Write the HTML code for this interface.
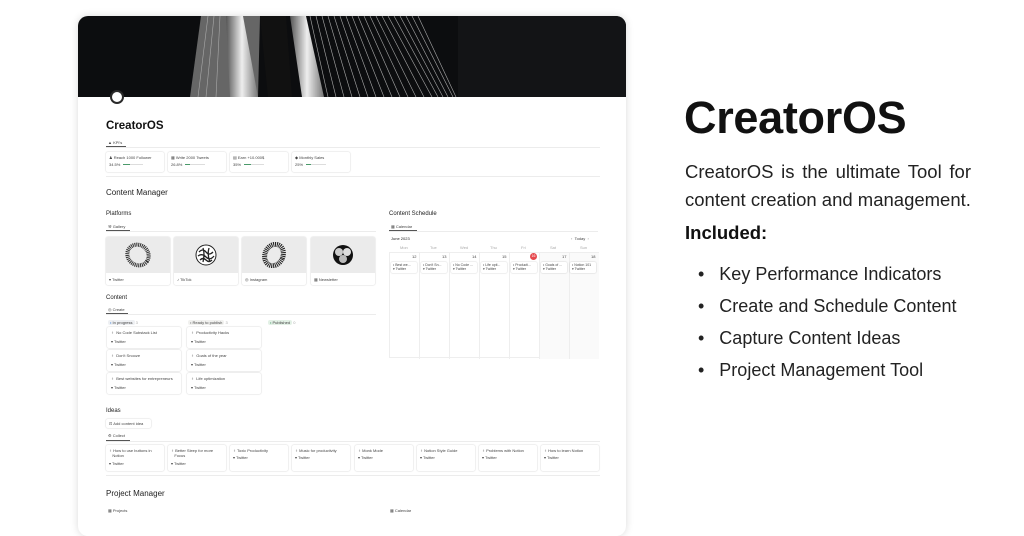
<!DOCTYPE html>
<html><head><meta charset="utf-8"><style>
*{margin:0;padding:0;box-sizing:border-box}
body{width:1024px;height:512px;overflow:hidden;background:#fff;font-family:"Liberation Sans",sans-serif;position:relative;color:#222}
.a{position:absolute}
#card{left:78px;top:16px;width:548px;height:520px;border-radius:10px;background:#fff;box-shadow:0 0 8px rgba(0,0,0,.15);overflow:hidden}
.t{position:absolute;font-size:4px;color:#444;white-space:nowrap}
.h{position:absolute;font-size:7px;color:#222;white-space:nowrap}
.bx{position:absolute;border-radius:2px;box-shadow:0 0 1.5px rgba(0,0,0,.25);background:#fff}
.ln{position:absolute;height:1px;background:#ececec}
.ul{position:absolute;height:1px;background:#555}
.bar{display:inline-block;width:20px;height:1px;background:#ddd;vertical-align:middle;margin-left:3px;position:relative}
.bar i{position:absolute;left:0;top:0;height:1px;background:#4a9a6a}
.cell{position:absolute;top:0;height:106px;border-right:1px solid #eee}
.ev{position:absolute;background:#fff;box-shadow:0 0 1.5px rgba(0,0,0,.25);border-radius:1.5px;height:11px;width:26px}
</style></head><body>
<div id="card" class="a">
 <div class="a" style="left:0;top:0;width:548px;height:81px;background:#0c0d0f;overflow:hidden">
  <svg width="548" height="81" style="position:absolute;left:0;top:0">
   <defs><linearGradient id="g1" x1="0" x2="1"><stop offset="0" stop-color="#555"/><stop offset=".5" stop-color="#eee"/><stop offset="1" stop-color="#777"/></linearGradient></defs>
   <polygon points="123,0 182,0 180,81 112,81" fill="#666"/>
   <polygon points="148,0 165,0 180,81 152,81" fill="url(#g1)"/>
   <polygon points="182,0 208,0 214,81 190,81" fill="#111"/>
   <polygon points="212,0 228,0 246,81 224,81" fill="url(#g1)"/>
   <g stroke="#aaa" stroke-width=".6">
    <line x1="232" y1="0" x2="250" y2="81"/><line x1="238" y1="0" x2="258" y2="81"/><line x1="244" y1="0" x2="266" y2="81"/><line x1="250" y1="0" x2="274" y2="81"/><line x1="256" y1="0" x2="282" y2="81"/><line x1="262" y1="0" x2="290" y2="81"/><line x1="268" y1="0" x2="298" y2="81"/><line x1="274" y1="0" x2="306" y2="81"/><line x1="280" y1="0" x2="314" y2="81"/><line x1="286" y1="0" x2="322" y2="81"/><line x1="292" y1="0" x2="330" y2="81"/><line x1="298" y1="0" x2="338" y2="81"/><line x1="304" y1="0" x2="346" y2="81"/><line x1="310" y1="0" x2="354" y2="81"/><line x1="316" y1="0" x2="360" y2="81"/><line x1="322" y1="0" x2="365" y2="81"/><line x1="328" y1="0" x2="370" y2="81"/><line x1="334" y1="0" x2="375" y2="81"/><line x1="340" y1="0" x2="378" y2="81"/>
    <line x1="130" y1="0" x2="120" y2="81"/><line x1="136" y1="0" x2="128" y2="81"/><line x1="142" y1="0" x2="138" y2="81"/>
   </g>
   <rect x="380" y="0" width="168" height="81" fill="#131416"/>
  </svg>
 </div>
 <div class="a" style="left:32px;top:74px;width:14px;height:14px;border-radius:50%;border:2px solid #2a2a2a;background:#fff"></div>
 <div class="a" style="left:28px;top:104px;font-size:11.5px;font-weight:bold;color:#111">CreatorOS</div>
 <div class="t" style="left:30px;top:124px">▲ KPI's</div>
 <div class="ul" style="left:28px;top:130px;width:20px"></div>
 <div class="ln" style="left:28px;top:131px;width:494px"></div>
 <div class="bx" style="left:28px;top:136px;width:58px;height:20px"></div>
 <div class="bx" style="left:90px;top:136px;width:58px;height:20px"></div>
 <div class="bx" style="left:152px;top:136px;width:58px;height:20px"></div>
 <div class="bx" style="left:214px;top:136px;width:58px;height:20px"></div>
 <div class="t" style="left:31px;top:139px">♟ Reach 1000 Follower</div><div class="t" style="left:31px;top:146px">34.5%<span class="bar"><i style="width:7px"></i></span></div>
 <div class="t" style="left:93px;top:139px">▦ Write 2000 Tweets</div><div class="t" style="left:93px;top:146px">26.8%<span class="bar"><i style="width:5px"></i></span></div>
 <div class="t" style="left:155px;top:139px">▤ Earn +10.000$</div><div class="t" style="left:155px;top:146px">35%<span class="bar"><i style="width:7px"></i></span></div>
 <div class="t" style="left:217px;top:139px">◆ Monthly Sales</div><div class="t" style="left:217px;top:146px">25%<span class="bar"><i style="width:5px"></i></span></div>
 <div class="ln" style="left:28px;top:160px;width:494px"></div>
 <div class="h" style="left:28px;top:172px;font-size:8px">Content Manager</div>
 <div class="h" style="left:28px;top:195px;font-size:6px">Platforms</div>
 <div class="t" style="left:30px;top:208px">⚒ Gallery</div>
 <div class="ul" style="left:28px;top:214px;width:24px"></div>
 <div class="ln" style="left:28px;top:215px;width:270px"></div>
 <div class="bx" style="left:28px;top:221px;width:64px;height:48px;overflow:hidden"><div class="a" style="left:0;top:0;width:64px;height:36px;background:#ebebeb"></div><svg class="a" style="left:18px;top:5px" width="28" height="26"><ellipse cx="14" cy="13" rx="11" ry="10" fill="none" stroke="#333" stroke-width="4" stroke-dasharray="1 .8" transform="rotate(35 14 13)"/></svg><div class="t" style="left:3px;top:40px">▾ Twitter</div></div>
 <div class="bx" style="left:96px;top:221px;width:64px;height:48px;overflow:hidden"><div class="a" style="left:0;top:0;width:64px;height:36px;background:#ebebeb"></div><svg class="a" style="left:21px;top:7px" width="22" height="22"><circle cx="11" cy="11" r="10" fill="#fff" stroke="#222" stroke-width="1"/><path d="M4 8q4-4 7 0t7 0M3 12q4-3 8 1t8-1M5 16q3-3 6 0t6 0M8 4q2 6 0 14M14 4q-2 7 1 14" stroke="#222" stroke-width="1.3" fill="none"/></svg><div class="t" style="left:3px;top:40px">♪ TikTok</div></div>
 <div class="bx" style="left:164px;top:221px;width:64px;height:48px;overflow:hidden"><div class="a" style="left:0;top:0;width:64px;height:36px;background:#ebebeb"></div><svg class="a" style="left:20px;top:5px" width="24" height="26"><ellipse cx="12" cy="13" rx="9" ry="11" fill="none" stroke="#222" stroke-width="5" stroke-dasharray="1 .8" transform="rotate(25 12 13)"/></svg><div class="t" style="left:3px;top:40px">◎ Instagram</div></div>
 <div class="bx" style="left:233px;top:221px;width:64px;height:48px;overflow:hidden"><div class="a" style="left:0;top:0;width:64px;height:36px;background:#ebebeb"></div><svg class="a" style="left:21px;top:7px" width="22" height="22"><circle cx="11" cy="11" r="10" fill="#111"/><circle cx="7" cy="8" r="4" fill="#ccc"/><circle cx="15" cy="8" r="4" fill="#ddd"/><circle cx="11" cy="15" r="4" fill="#bbb"/></svg><div class="t" style="left:3px;top:40px">▦ Newsletter</div></div>
 <div class="h" style="left:28px;top:279px;font-size:6px">Content</div>
 <div class="t" style="left:30px;top:291px">◎ Create</div>
 <div class="ul" style="left:28px;top:297px;width:22px"></div>
 <div class="ln" style="left:28px;top:298px;width:270px"></div>
 <div class="t" style="left:30px;top:304px"><span style="background:#eef0f3;border-radius:2px;padding:0 2px"><b style="color:#3a7bd5">•</b> In progress</span> <span style="color:#aaa">3</span></div>
 <div class="t" style="left:110px;top:304px"><span style="background:#f1f1ef;border-radius:2px;padding:0 2px"><b style="color:#777">•</b> Ready to publish</span> <span style="color:#aaa">3</span></div>
 <div class="t" style="left:190px;top:304px"><span style="background:#e3f1e6;border-radius:2px;padding:0 2px"><b style="color:#4a9a6a">•</b> Published</span> <span style="color:#aaa">0</span></div>
 <div class="bx" style="left:29px;top:311px;width:74px;height:21px"></div><div class="t" style="left:33px;top:314px">♀ &nbsp;No Code Substack List</div><div class="t" style="left:33px;top:323px">▾ Twitter</div>
 <div class="bx" style="left:29px;top:334px;width:74px;height:21px"></div><div class="t" style="left:33px;top:337px">♀ &nbsp;Don't Snooze</div><div class="t" style="left:33px;top:346px">▾ Twitter</div>
 <div class="bx" style="left:29px;top:357px;width:74px;height:21px"></div><div class="t" style="left:33px;top:360px">♀ &nbsp;Best websites for entrepreneurs</div><div class="t" style="left:33px;top:369px">▾ Twitter</div>
 <div class="bx" style="left:109px;top:311px;width:74px;height:21px"></div><div class="t" style="left:113px;top:314px">♀ &nbsp;Productivity Hacks</div><div class="t" style="left:113px;top:323px">▾ Twitter</div>
 <div class="bx" style="left:109px;top:334px;width:74px;height:21px"></div><div class="t" style="left:113px;top:337px">♀ &nbsp;Goals of the year</div><div class="t" style="left:113px;top:346px">▾ Twitter</div>
 <div class="bx" style="left:109px;top:357px;width:74px;height:21px"></div><div class="t" style="left:113px;top:360px">♀ &nbsp;Life optimization</div><div class="t" style="left:113px;top:369px">▾ Twitter</div>
 <div class="h" style="left:28px;top:392px;font-size:6px">Ideas</div>
 <div class="bx" style="left:28px;top:403px;width:45px;height:9px"></div><div class="t" style="left:31px;top:405px">⊡ Add content idea</div>
 <div class="t" style="left:30px;top:417px">⚙ Collect</div>
 <div class="ul" style="left:28px;top:424px;width:24px"></div>
 <div class="ln" style="left:28px;top:425px;width:494px"></div>
 <div class="bx" style="left:28px;top:429px;width:58px;height:26px"></div><div class="t" style="left:31px;top:432px">♀ How to use buttons in<br>&nbsp;&nbsp;&nbsp;Notion</div><div class="t" style="left:31px;top:445px">▾ Twitter</div>
 <div class="bx" style="left:90px;top:429px;width:58px;height:26px"></div><div class="t" style="left:93px;top:432px">♀ Better Sleep for more<br>&nbsp;&nbsp;&nbsp;Focus</div><div class="t" style="left:93px;top:445px">▾ Twitter</div>
 <div class="bx" style="left:152px;top:429px;width:58px;height:26px"></div><div class="t" style="left:155px;top:432px">♀ Toxic Productivity</div><div class="t" style="left:155px;top:439px">▾ Twitter</div>
 <div class="bx" style="left:214px;top:429px;width:58px;height:26px"></div><div class="t" style="left:217px;top:432px">♀ Music for productivity</div><div class="t" style="left:217px;top:439px">▾ Twitter</div>
 <div class="bx" style="left:277px;top:429px;width:58px;height:26px"></div><div class="t" style="left:280px;top:432px">♀ Monk Mode</div><div class="t" style="left:280px;top:439px">▾ Twitter</div>
 <div class="bx" style="left:339px;top:429px;width:58px;height:26px"></div><div class="t" style="left:342px;top:432px">♀ Notion Style Guide</div><div class="t" style="left:342px;top:439px">▾ Twitter</div>
 <div class="bx" style="left:401px;top:429px;width:58px;height:26px"></div><div class="t" style="left:404px;top:432px">♀ Problems with Notion</div><div class="t" style="left:404px;top:439px">▾ Twitter</div>
 <div class="bx" style="left:463px;top:429px;width:58px;height:26px"></div><div class="t" style="left:466px;top:432px">♀ How to learn Notion</div><div class="t" style="left:466px;top:439px">▾ Twitter</div>
 <div class="ln" style="left:28px;top:459px;width:494px"></div>
 <div class="h" style="left:28px;top:473px;font-size:8px">Project Manager</div>
 <div class="t" style="left:30px;top:492px">▦ Projects</div>
 <div class="t" style="left:312px;top:492px">▦ Calendar</div>
 <div class="h" style="left:311px;top:195px;font-size:6px">Content Schedule</div>
 <div class="t" style="left:313px;top:208px">▦ Calendar</div>
 <div class="ul" style="left:311px;top:214px;width:28px"></div>
 <div class="ln" style="left:311px;top:215px;width:209px"></div>
 <div class="t" style="left:313px;top:220px;color:#222">June 2023</div>
 <div class="t" style="left:493px;top:220px;color:#888">‹ &nbsp;<span style="color:#444">Today</span> &nbsp;›</div>
 <div class="a" style="left:311px;top:236px;width:210px;height:106px;border:1px solid #eee;background:#fff">
  <div class="cell" style="left:0;width:30px"></div><div class="cell" style="left:30px;width:30px"></div><div class="cell" style="left:60px;width:30px"></div><div class="cell" style="left:90px;width:30px"></div><div class="cell" style="left:120px;width:30px"></div><div class="cell" style="left:150px;width:30px;background:#fafafa"></div><div class="cell" style="left:180px;width:29px;background:#fafafa;border:0"></div>
 </div>
 <div class="t" style="left:322px;top:229px;color:#aaa">Mon</div><div class="t" style="left:352px;top:229px;color:#aaa">Tue</div><div class="t" style="left:382px;top:229px;color:#aaa">Wed</div><div class="t" style="left:412px;top:229px;color:#aaa">Thu</div><div class="t" style="left:443px;top:229px;color:#aaa">Fri</div><div class="t" style="left:472px;top:229px;color:#aaa">Sat</div><div class="t" style="left:502px;top:229px;color:#aaa">Sun</div>
 <div class="t" style="left:334px;top:238px">12</div><div class="t" style="left:364px;top:238px">13</div><div class="t" style="left:394px;top:238px">14</div><div class="t" style="left:424px;top:238px">15</div>
 <div class="a" style="left:452px;top:237px;width:7px;height:7px;border-radius:50%;background:#e5484d;color:#fff;font-size:3.5px;text-align:center;line-height:7px">16</div>
 <div class="t" style="left:484px;top:238px">17</div><div class="t" style="left:513px;top:238px">18</div>
 <div class="ev" style="left:313px;top:246px"></div><div class="t" style="left:315px;top:247px;font-size:3.5px">• Best we...<br>▾ Twitter</div>
 <div class="ev" style="left:343px;top:246px"></div><div class="t" style="left:345px;top:247px;font-size:3.5px">• Don't Sn...<br>▾ Twitter</div>
 <div class="ev" style="left:373px;top:246px"></div><div class="t" style="left:375px;top:247px;font-size:3.5px">• No Code ...<br>▾ Twitter</div>
 <div class="ev" style="left:403px;top:246px"></div><div class="t" style="left:405px;top:247px;font-size:3.5px">• Life opti...<br>▾ Twitter</div>
 <div class="ev" style="left:433px;top:246px"></div><div class="t" style="left:435px;top:247px;font-size:3.5px">• Producti...<br>▾ Twitter</div>
 <div class="ev" style="left:463px;top:246px"></div><div class="t" style="left:465px;top:247px;font-size:3.5px">• Goals of ...<br>▾ Twitter</div>
 <div class="ev" style="left:492px;top:246px"></div><div class="t" style="left:494px;top:247px;font-size:3.5px">• Notion 101<br>▾ Twitter</div>
</div>
<div class="a" style="left:684px;top:92px;font-size:45px;font-weight:bold;color:#111;letter-spacing:-.3px">CreatorOS</div>
<div class="a" style="left:685px;top:158px;width:286px;font-size:18.5px;line-height:28px;color:#222;text-align:justify;text-align-last:justify">CreatorOS is the ultimate Tool for</div>
<div class="a" style="left:685px;top:186px;font-size:18.5px;line-height:28px;color:#222">content creation and management.</div>
<div class="a" style="left:685px;top:222px;font-size:18.5px;font-weight:bold;color:#111">Included:</div>
<div class="a" style="left:698px;top:258px;font-size:18px;line-height:32px;color:#222">
 <div>•&nbsp;&nbsp; Key Performance Indicators</div>
 <div>•&nbsp;&nbsp; Create and Schedule Content</div>
 <div>•&nbsp;&nbsp; Capture Content Ideas</div>
 <div>•&nbsp;&nbsp; Project Management Tool</div>
</div>
</body></html>
